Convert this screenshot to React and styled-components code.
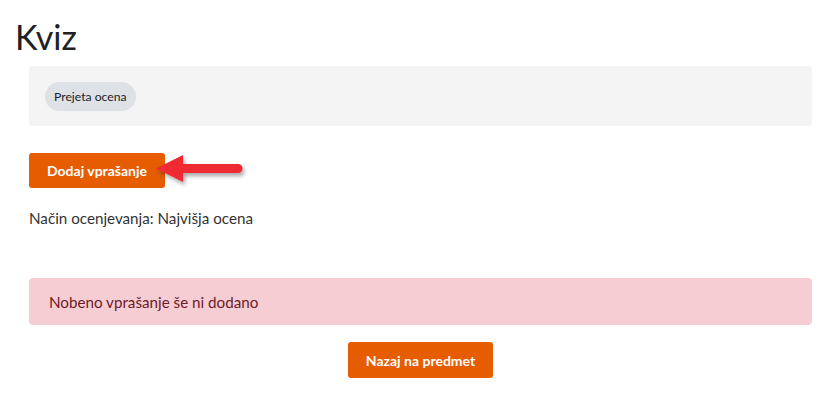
import React from "react";
import styled, { createGlobalStyle } from "styled-components";

const Global = createGlobalStyle`
  html, body { margin: 0; padding: 0; background: #fff; }
  body { font-family: Lato, "Noto Sans", sans-serif; color: #333; }
`;

const Page = styled.div`
  width: 828px;
  height: 394px;
  box-sizing: border-box;
  padding: 14px 16px 0 15px;
  overflow: hidden;
`;

const Title = styled.h1`
  margin: 0;
  font-weight: 400;
  font-size: 34px;
  line-height: 46px;
  color: #1d2125;
`;

const Content = styled.div`
  margin: 6px 0 0 14px;
  display: flex;
  flex-direction: column;
`;

const InfoBox = styled.div`
  height: 60px;
  background: #f4f4f4;
  border-radius: 4px;
  display: flex;
  align-items: center;
  padding: 0 16px;
`;

const Badge = styled.span`
  display: inline-flex;
  align-items: center;
  height: 29px;
  padding: 0 9px;
  border-radius: 15px;
  background: #dee2e6;
  font-size: 12.2px;
  color: #1d2125;
`;

const ButtonRow = styled.div`
  position: relative;
  margin-top: 27px;
  display: flex;
  justify-content: ${(p) => (p.$center ? "center" : "flex-start")};
`;

const Button = styled.button`
  height: ${(p) => p.$h || 35}px;
  padding: 0 18px;
  border: none;
  border-radius: 3px;
  background: #e65c00;
  color: #fff;
  font-family: Lato, "Noto Sans", sans-serif;
  font-weight: 700;
  font-size: 14px;
  cursor: pointer;
`;

const Arrow = styled.svg`
  position: absolute;
  left: 124px;
  top: 0;
  overflow: visible;
`;

const Method = styled.p`
  margin: 20px 0 0;
  font-size: 15.2px;
  line-height: 20px;
  color: #333;
`;

const Alert = styled.div`
  margin-top: 50px;
  height: 47px;
  box-sizing: border-box;
  background: #f5cdd2;
  border-radius: 4px;
  display: flex;
  align-items: center;
  padding: 0 20px;
  font-size: 15.2px;
  color: #6e1a2a;
`;

const BackRow = styled(ButtonRow)`
  margin-top: 17px;
`;

export default function App() {
  return (
    <>
      <Global />
      <Page>
        <Title>Kviz</Title>
        <Content>
          <InfoBox>
            <Badge>Prejeta ocena</Badge>
          </InfoBox>
          <ButtonRow>
            <Button>Dodaj vprašanje</Button>
            <Arrow width="92" height="36" viewBox="0 0 92 36">
              <defs>
                <filter id="sh" x="-20%" y="-40%" width="150%" height="200%">
                  <feDropShadow dx="2" dy="3" stdDeviation="2" floodColor="#000" floodOpacity="0.35" />
                </filter>
              </defs>
              <g filter="url(#sh)">
                <line x1="23" y1="15.5" x2="85" y2="15.5" stroke="#ef2a30" strokeWidth="9" strokeLinecap="round" />
                <polygon points="3,15.5 30,2 30,29" fill="#ef2a30" />
              </g>
            </Arrow>
          </ButtonRow>
          <Method>Način ocenjevanja: Najvišja ocena</Method>
          <Alert>Nobeno vprašanje še ni dodano</Alert>
          <BackRow $center>
            <Button $h={36}>Nazaj na predmet</Button>
          </BackRow>
        </Content>
      </Page>
    </>
  );
}
